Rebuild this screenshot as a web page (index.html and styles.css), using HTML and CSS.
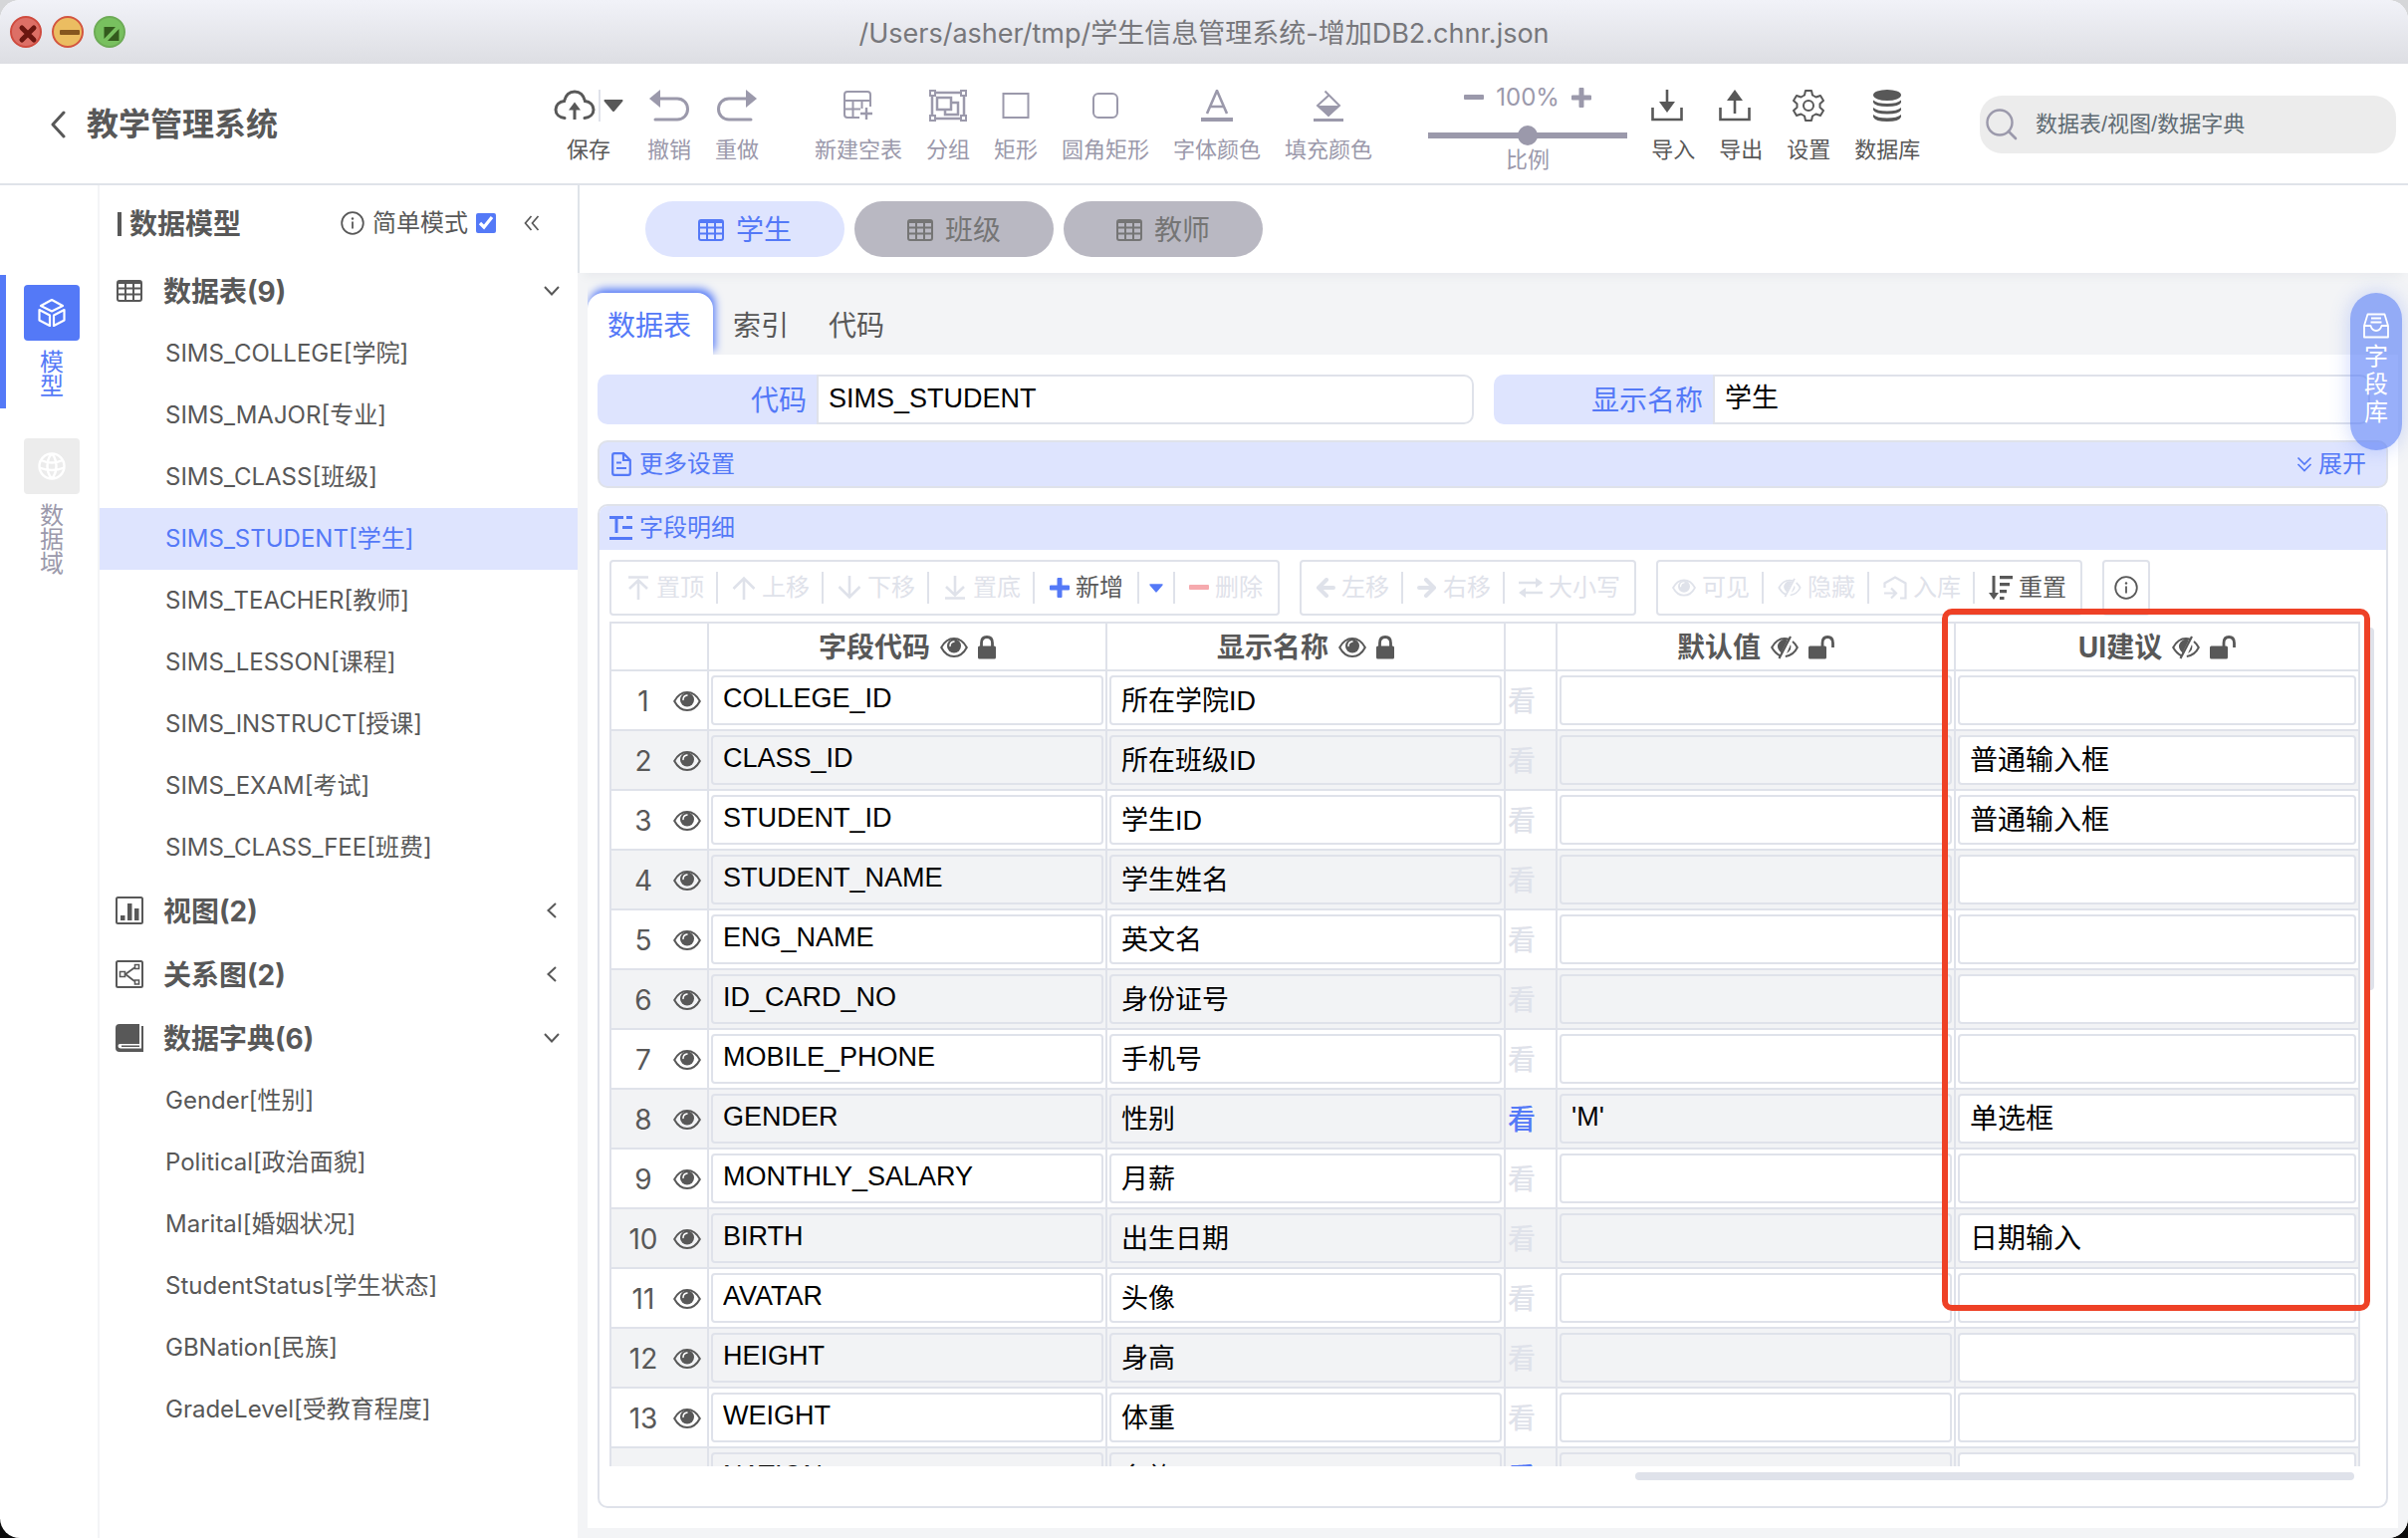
FILE: index.html
```html
<!DOCTYPE html>
<html lang="zh-CN">
<head>
<meta charset="utf-8">
<title>教学管理系统</title>
<link rel="stylesheet" href="styles.css">
</head>
<body>
<svg class="sprite" aria-hidden="true">
  <symbol id="i-back" viewBox="0 0 16 28"><path d="M14 2 3 14l11 12" fill="none" stroke="currentColor" stroke-width="3" stroke-linecap="round" stroke-linejoin="round"/></symbol>
  <symbol id="i-cloud" viewBox="0 0 42 32"><path d="M11 28.500C5.500 28 2 24.500 2 20c0-4.500 3.500-8 8.500-8.500C12 5.500 16 2 21 2s9 3.500 10.500 9.500C36.500 12 40 15.500 40 20c0 4.500-3.500 8-9 8.500" fill="none" stroke="currentColor" stroke-width="3" stroke-linecap="round"/><path d="M21 12.500l6 8h-4.500V30h-3v-9.500H15z" fill="currentColor"/></symbol>
  <symbol id="i-caret" viewBox="0 0 20 12"><path d="M1 0h18q1 1 0 2l-8 9.500q-1 1-2 0L1 2q-1-1 0-2z" fill="currentColor"/></symbol>
  <symbol id="i-undo" viewBox="0 0 40 32"><path d="M10 9h18c6 0 10.500 4.500 10.500 10.500S34 30 28 30H6" fill="none" stroke="currentColor" stroke-width="3" stroke-linecap="round"/><path d="M0 9 11 0v18z" fill="currentColor"/></symbol>
  <symbol id="i-redo" viewBox="0 0 40 32"><path d="M30 9H12C6 9 1.500 13.500 1.500 19.500S6 30 12 30h22" fill="none" stroke="currentColor" stroke-width="3" stroke-linecap="round"/><path d="M40 9 29 0v18z" fill="currentColor"/></symbol>
  <symbol id="i-newtable" viewBox="0 0 30 30"><path d="M27 16V4q0-3-3-3H4Q1 1 1 4v20q0 3 3 3h12M1 10h26M1 18.500h16M9.500 10v17M18.500 10v8" fill="none" stroke="currentColor" stroke-width="2"/><path d="M23 17v12M17 23h12" stroke="currentColor" stroke-width="2.400"/></symbol>
  <symbol id="i-group" viewBox="0 0 40 34"><path d="M4 4h32v26H4z" fill="none" stroke="currentColor" stroke-width="2.500"/><path d="M9 9h14v12H9zM23 14h7v12H17v-5" fill="none" stroke="currentColor" stroke-width="2.500"/><path d="M2 2h5v5H2zM33 2h5v5h-5zM2 27h5v5H2zM33 27h5v5h-5z" fill="#fff" stroke="currentColor" stroke-width="2"/></symbol>
  <symbol id="i-rect" viewBox="0 0 28 28"><path d="M1.500 2h25v24h-25z" fill="none" stroke="currentColor" stroke-width="2"/></symbol>
  <symbol id="i-round" viewBox="0 0 28 28"><rect x="2" y="2" width="24" height="24" rx="5" fill="none" stroke="currentColor" stroke-width="2"/></symbol>
  <symbol id="i-font" viewBox="0 0 32 32"><path d="M6 24 16 1l10 23M9.500 17h13" fill="none" stroke="currentColor" stroke-width="2.600"/><path d="M0 28h32v4H0z" fill="currentColor"/></symbol>
  <symbol id="i-fill" viewBox="0 0 30 32"><path d="M11.500 1.500 26 16 15 26 4 16 16 5" fill="none" stroke="currentColor" stroke-width="2"/><path d="M4 16h22L15 27zM0 29h30v3H0z" fill="currentColor"/></symbol>
  <symbol id="i-minus" viewBox="0 0 20 20"><rect y="7" width="20" height="5" rx="1" fill="currentColor"/></symbol>
  <symbol id="i-plus" viewBox="0 0 20 20"><path d="M1 7.500h6.500V1q0-1 1-1h3q1 0 1 1v6.500H19q1 0 1 1v3q0 1-1 1h-6.500V19q0 1-1 1h-3q-1 0-1-1v-6.500H1q-1 0-1-1v-3q0-1 1-1z" fill="currentColor"/></symbol>
  <symbol id="i-in" viewBox="0 0 32 32"><path d="M1.500 18v12h29V18M16 0v14" fill="none" stroke="currentColor" stroke-width="2.600"/><path d="M8 12h16l-8 11z" fill="currentColor"/></symbol>
  <symbol id="i-out" viewBox="0 0 32 32"><path d="M1.500 18v12h29V18M16 24V8" fill="none" stroke="currentColor" stroke-width="2.600"/><path d="M8 11h16L16 0z" fill="currentColor"/></symbol>
  <symbol id="i-gear" viewBox="0 0 32 32"><path d="M13 1h6l1 4.500 3.500 2L28 6l3 5-3.500 3.200v3.600L31 21l-3 5-4.500-1.500-3.500 2L19 31h-6l-1-4.500-3.500-2L4 26l-3-5 3.500-3.200v-3.600L1 11l3-5 4.500 1.500 3.500-2z" fill="none" stroke="currentColor" stroke-width="2" stroke-linejoin="round"/><circle cx="16" cy="16" r="5" fill="none" stroke="currentColor" stroke-width="2"/></symbol>
  <symbol id="i-db" viewBox="0 0 28 32"><g fill="currentColor"><ellipse cx="14" cy="5.500" rx="14" ry="5.500"/><path d="M0 10.500q4 3.500 14 3.500t14-3.500V13q-2 4-14 4T0 13zM0 18q4 3.500 14 3.500T28 18v2.500q-2 4-14 4T0 20.500zM0 25q4 3.500 14 3.500T28 25v2.500Q26 32 14 32T0 27.500z"/></g></symbol>
  <symbol id="i-search" viewBox="0 0 32 32"><circle cx="14" cy="14" r="12.500" fill="none" stroke="currentColor" stroke-width="2.400"/><path d="m23 23 7 7" stroke="currentColor" stroke-width="2.600" stroke-linecap="round"/></symbol>
  <symbol id="i-cube" viewBox="0 0 28 28"><path d="M14 1l11 6-11 5.500L3 7zM1.500 11 12 16.500V27L1.500 21.500zM26.500 11 16 16.500V27l10.500-5.500z" fill="none" stroke="currentColor" stroke-width="2.200" stroke-linejoin="round"/></symbol>
  <symbol id="i-globe" viewBox="0 0 28 28"><g fill="none" stroke="currentColor" stroke-width="2.400"><circle cx="14" cy="14" r="12.500"/><path d="M14 1.500C8 8 8 20 14 26.500M14 1.500C20 8 20 20 14 26.500M3 8q11 5 22 0M1.500 15.500q12.500 5 25 0"/></g></symbol>
  <symbol id="i-info" viewBox="0 0 24 24"><circle cx="12" cy="12" r="10.800" fill="none" stroke="currentColor" stroke-width="1.800"/><circle cx="12" cy="7.500" r="1.200" fill="currentColor"/><path d="M12 10.500v7" stroke="currentColor" stroke-width="1.800"/></symbol>
  <symbol id="i-dbl-left" viewBox="0 0 16 16"><path d="M7.500 1 1.500 8l6 7M14.500 1l-6 7 6 7" fill="none" stroke="currentColor" stroke-width="1.700"/></symbol>
  <symbol id="i-dbl-down" viewBox="0 0 16 16"><path d="M1.500 1.500 8 8l6.500-6.500M1.500 8 8 14.500 14.500 8" fill="none" stroke="currentColor" stroke-width="1.700"/></symbol>
  <symbol id="i-down" viewBox="0 0 16 16"><path d="m1 4 7 7.500L15 4" fill="none" stroke="currentColor" stroke-width="2"/></symbol>
  <symbol id="i-left" viewBox="0 0 16 16"><path d="M12 1 4.500 8l7.500 7" fill="none" stroke="currentColor" stroke-width="2"/></symbol>
  <symbol id="i-table" viewBox="0 0 26 22"><rect x="1" y="1" width="24" height="20" rx="2" fill="none" stroke="currentColor" stroke-width="2"/><path d="M1 3h24M1 8.500h24M1 14.500h24M9 3v18M17 3v18" fill="none" stroke="currentColor" stroke-width="2"/></symbol>
  <symbol id="i-chart" viewBox="0 0 28 28"><rect x="1" y="1" width="26" height="26" rx="1.500" fill="none" stroke="currentColor" stroke-width="2"/><path d="M5 19h4.500v5H5zM12 7h4.500v17H12zM19 12h4.500v12H19z" fill="currentColor"/></symbol>
  <symbol id="i-rel" viewBox="0 0 28 28"><g fill="none" stroke="currentColor"><rect x="1" y="1" width="26" height="26" rx="1.500" stroke-width="2"/><path d="M4.500 11.500h5v5h-5zM19.500 4.500h4v4h-4zM19.500 20h4v4h-4z" stroke-width="1.600"/><path d="M19 7.500 10 14l9 7" stroke-width="1.800"/></g></symbol>
  <symbol id="i-book" viewBox="0 0 28 28"><path d="M4 0h20v20H4.500q-2 0-2 2T5 24.500h21V2h2v26H4q-4 0-4-4V4q0-4 4-4zM6 21.500h18v1.500H6z" fill="currentColor"/></symbol>
  <symbol id="i-doc" viewBox="0 0 20 24"><path d="M12 1.200H3Q1.200 1.200 1.200 3v18q0 1.800 1.800 1.800h14q1.800 0 1.800-1.800V8zM12 1.200V8h6.800M5 10.500h5M5 16h10" fill="none" stroke="currentColor" stroke-width="2.200"/></symbol>
  <symbol id="i-text" viewBox="0 0 24 24"><path d="M0 0h14v3H8.500v14h-3V3H0zM17 0h6v3h-6zM13 10h10v3H13zM0 21h23v3H0z" fill="currentColor"/></symbol>
  <symbol id="i-box" viewBox="0 0 26 26"><path d="M1 13 4.500 1.500h17L25 13v11.500H1zM1 13h6.500q1.500 5 5.500 5t5.500-5H25M8 5.500h10M7.500 9.500h11" fill="none" stroke="currentColor" stroke-width="1.800" stroke-linejoin="round"/></symbol>
  <symbol id="i-top" viewBox="0 0 24 24"><path d="M2 1.500h20M12 24V5M3 13l9-8.500 9 8.500" fill="none" stroke="currentColor" stroke-width="2.600"/></symbol>
  <symbol id="i-up" viewBox="0 0 24 24"><path d="M12 24V3M1.500 13 12 2.500 22.500 13" fill="none" stroke="currentColor" stroke-width="2.600"/></symbol>
  <symbol id="i-dn" viewBox="0 0 24 24"><path d="M12 0v21M1.500 11 12 21.500 22.500 11" fill="none" stroke="currentColor" stroke-width="2.600"/></symbol>
  <symbol id="i-bottom" viewBox="0 0 24 24"><path d="M2 22.500h20M12 0v19M3 11l9 8.500 9-8.500" fill="none" stroke="currentColor" stroke-width="2.600"/></symbol>
  <symbol id="i-arrl" viewBox="0 0 20 20"><path d="M11 2 3 10l8 8M4 10h14" fill="none" stroke="currentColor" stroke-width="4" stroke-linecap="round" stroke-linejoin="round"/></symbol>
  <symbol id="i-arrr" viewBox="0 0 20 20"><path d="m9 2 8 8-8 8M16 10H2" fill="none" stroke="currentColor" stroke-width="4" stroke-linecap="round" stroke-linejoin="round"/></symbol>
  <symbol id="i-swap" viewBox="0 0 24 20"><path d="M0 5h18M6 15h18" stroke="currentColor" stroke-width="2.600"/><path d="M17 0l7 5-7 5zM7 10l-7 5 7 5z" fill="currentColor"/></symbol>
  <symbol id="i-eye" viewBox="0 0 28 22"><path d="M1.200 11Q6 2 14 2t12.800 9Q22 20 14 20T1.200 11z" fill="none" stroke="currentColor" stroke-width="2"/><circle cx="14" cy="9.500" r="7" fill="currentColor"/><path d="M10 9.500q0-4 4-4.500" fill="none" stroke="#fff" stroke-width="1.500" stroke-linecap="round"/></symbol>
  <symbol id="i-eyeoff" viewBox="0 0 28 24"><path d="M10 20.500Q4.500 18 1.200 12 6 3 14 3q2 0 4 .6M22 6q3 2.500 4.800 6-4 8-12 9" fill="none" stroke="currentColor" stroke-width="2"/><path d="M17 4.500A7 7 0 0 0 8.500 15l2 2.500zM20 9q2 5-4 9z" fill="currentColor"/><path d="M20 1 8.500 23" stroke="currentColor" stroke-width="2.200"/></symbol>
  <symbol id="i-lock" viewBox="0 0 18 24"><rect y="10.500" width="18" height="13" rx="1.500" fill="currentColor"/><path d="M3.500 11V7.500Q3.500 1.500 9 1.500t5.500 6V11" fill="none" stroke="currentColor" stroke-width="2.800"/></symbol>
  <symbol id="i-unlock" viewBox="0 0 26 24"><rect y="10.500" width="18" height="13" rx="1.500" fill="currentColor"/><path d="M14 11V7.500Q14 1.500 19.200 1.500t5.300 6V12" fill="none" stroke="currentColor" stroke-width="2.800"/></symbol>
  <symbol id="i-store" viewBox="0 0 24 24"><path d="M1.500 12V7.500L12 1.500l10.500 6v15H17M1 17.500h11M8 12.500l5 5-5 5" fill="none" stroke="currentColor" stroke-width="2.200"/></symbol>
  <symbol id="i-sort" viewBox="0 0 24 24"><path d="M5 0v20" stroke="currentColor" stroke-width="3"/><path d="M0 17h10l-5 7zM11 0h13v3.200H11zM11 7h10v3.200H11zM11 14h7v3.200h-7zM11 21h4.500v3H11z" fill="currentColor"/></symbol>
</svg>

<div class="window">
  <div class="titlebar">
    <div class="lights">
      <button class="light red" aria-label="关闭"><svg viewBox="0 0 32 32"><path d="m10 10 12 12M22 10 10 22" stroke="#6a1610" stroke-width="5" stroke-linecap="round"/></svg></button>
      <button class="light yellow" aria-label="最小化"><svg viewBox="0 0 32 32"><rect x="6" y="12" width="20" height="5" rx="1" fill="#85561f"/></svg></button>
      <button class="light green" aria-label="缩放"><svg viewBox="0 0 32 32"><path d="M8.500 9H20L8.500 21zM23.500 23H12l11.500-12z" fill="#335a1d"/></svg></button>
    </div>
    <div class="path">/Users/asher/tmp/学生信息管理系统-增加DB2.chnr.json</div>
  </div>

  <header class="header">
    <a class="brand" href="#"><svg class="brand-back"><use href="#i-back"/></svg><span>教学管理系统</span></a>
    <div class="toolbar">
      <div class="tools">
        <button class="tool dark"><span class="tool-icon save"><svg width="42" height="36"><use href="#i-cloud"/></svg><i class="save-sep"></i><svg width="20" height="12"><use href="#i-caret"/></svg></span>保存</button>
        <button class="tool"><span class="tool-icon"><svg width="40" height="32"><use href="#i-undo"/></svg></span>撤销</button>
        <button class="tool"><span class="tool-icon"><svg width="40" height="32"><use href="#i-redo"/></svg></span>重做</button>
      </div>
      <div class="tools">
        <button class="tool"><span class="tool-icon"><svg width="30" height="30"><use href="#i-newtable"/></svg></span>新建空表</button>
        <button class="tool"><span class="tool-icon"><svg width="40" height="34"><use href="#i-group"/></svg></span>分组</button>
        <button class="tool"><span class="tool-icon"><svg width="28" height="28"><use href="#i-rect"/></svg></span>矩形</button>
        <button class="tool"><span class="tool-icon"><svg width="28" height="28"><use href="#i-round"/></svg></span>圆角矩形</button>
        <button class="tool"><span class="tool-icon"><svg width="32" height="32"><use href="#i-font"/></svg></span>字体颜色</button>
        <button class="tool"><span class="tool-icon"><svg width="30" height="32"><use href="#i-fill"/></svg></span>填充颜色</button>
      </div>
      <div class="tools">
        <div class="zoom">
          <div class="zoom-row"><button aria-label="缩小"><svg width="20" height="20"><use href="#i-minus"/></svg></button><span>100%</span><button aria-label="放大"><svg width="20" height="20"><use href="#i-plus"/></svg></button></div>
          <input class="zoom-range" id="zoom" type="range" min="0" max="200" value="100">
          <label for="zoom">比例</label>
        </div>
        <button class="tool dark start"><span class="tool-icon"><svg width="32" height="32"><use href="#i-in"/></svg></span>导入</button>
        <button class="tool dark start"><span class="tool-icon"><svg width="32" height="32"><use href="#i-out"/></svg></span>导出</button>
        <button class="tool dark"><span class="tool-icon"><svg width="32" height="32"><use href="#i-gear"/></svg></span>设置</button>
        <button class="tool dark"><span class="tool-icon"><svg width="28" height="32"><use href="#i-db"/></svg></span>数据库</button>
      </div>
    </div>
    <label class="search"><svg width="32" height="32"><use href="#i-search"/></svg><input type="search" placeholder="数据表/视图/数据字典" aria-label="搜索"></label>
  </header>

  <div class="body">
    <nav class="rail">
      <a class="rail-item active" href="#"><span class="rail-icon"><svg width="28" height="28"><use href="#i-cube"/></svg></span><span class="rail-text">模型</span></a>
      <a class="rail-item" href="#"><span class="rail-icon"><svg width="28" height="28"><use href="#i-globe"/></svg></span><span class="rail-text">数据域</span></a>
    </nav>

    <aside class="panel">
      <div class="panel-head">
        <h2>数据模型</h2>
        <svg class="panel-info" width="24" height="24"><use href="#i-info"/></svg>
        <label for="simple">简单模式</label>
        <input id="simple" type="checkbox" checked>
        <button class="collapse" aria-label="收起"><svg width="16" height="16"><use href="#i-dbl-left"/></svg></button>
      </div>
      <h3 class="group"><svg width="26" height="22"><use href="#i-table"/></svg><span>数据表(9)</span><svg class="arrow"><use href="#i-down"/></svg></h3>
      <ul>
        <li><a href="#">SIMS_COLLEGE[学院]</a></li>
        <li><a href="#">SIMS_MAJOR[专业]</a></li>
        <li><a href="#">SIMS_CLASS[班级]</a></li>
        <li><a class="active" href="#">SIMS_STUDENT[学生]</a></li>
        <li><a href="#">SIMS_TEACHER[教师]</a></li>
        <li><a href="#">SIMS_LESSON[课程]</a></li>
        <li><a href="#">SIMS_INSTRUCT[授课]</a></li>
        <li><a href="#">SIMS_EXAM[考试]</a></li>
        <li><a href="#">SIMS_CLASS_FEE[班费]</a></li>
      </ul>
      <h3 class="group"><svg width="28" height="28"><use href="#i-chart"/></svg><span>视图(2)</span><svg class="arrow"><use href="#i-left"/></svg></h3>
      <h3 class="group"><svg width="28" height="28"><use href="#i-rel"/></svg><span>关系图(2)</span><svg class="arrow"><use href="#i-left"/></svg></h3>
      <h3 class="group"><svg width="28" height="28"><use href="#i-book"/></svg><span>数据字典(6)</span><svg class="arrow"><use href="#i-down"/></svg></h3>
      <ul>
        <li><a href="#">Gender[性别]</a></li>
        <li><a href="#">Political[政治面貌]</a></li>
        <li><a href="#">Marital[婚姻状况]</a></li>
        <li><a href="#">StudentStatus[学生状态]</a></li>
        <li><a href="#">GBNation[民族]</a></li>
        <li><a href="#">GradeLevel[受教育程度]</a></li>
      </ul>
    </aside>

    <main class="main">
      <div class="pills">
        <button class="pill active"><svg width="26" height="22"><use href="#i-table"/></svg>学生</button>
        <button class="pill"><svg width="26" height="22"><use href="#i-table"/></svg>班级</button>
        <button class="pill"><svg width="26" height="22"><use href="#i-table"/></svg>教师</button>
      </div>
      <div class="work">
        <div class="tabs">
          <button class="tab active">数据表</button><button class="tab">索引</button><button class="tab">代码</button>
        </div>
        <div class="card">
          <div class="form">
            <div class="field"><label for="code">代码</label><input id="code" value="SIMS_STUDENT"></div>
            <div class="field"><label for="name">显示名称</label><input id="name" value="学生"></div>
          </div>
          <div class="more">
            <svg width="20" height="24"><use href="#i-doc"/></svg><span>更多设置</span>
            <button class="expand"><svg width="16" height="16"><use href="#i-dbl-down"/></svg>展开</button>
          </div>
          <section class="detail">
            <h4><svg width="24" height="24"><use href="#i-text"/></svg>字段明细</h4>
            <div class="ops">
              <div class="op-group rows">
                <button disabled><svg width="24" height="24"><use href="#i-top"/></svg>置顶</button>
                <button disabled><svg width="24" height="24"><use href="#i-up"/></svg>上移</button>
                <button disabled><svg width="24" height="24"><use href="#i-dn"/></svg>下移</button>
                <button disabled><svg width="24" height="24"><use href="#i-bottom"/></svg>置底</button>
                <button class="add"><svg class="blue" width="20" height="20"><use href="#i-plus"/></svg>新增</button>
                <button class="drop" aria-label="更多新增"><svg class="blue" width="14" height="9"><use href="#i-caret"/></svg></button>
                <button disabled><svg class="pink" width="20" height="20"><use href="#i-minus"/></svg>删除</button>
              </div>
              <div class="op-group">
                <button disabled><svg width="20" height="20"><use href="#i-arrl"/></svg>左移</button>
                <button disabled><svg width="20" height="20"><use href="#i-arrr"/></svg>右移</button>
                <button disabled><svg width="24" height="20"><use href="#i-swap"/></svg>大小写</button>
              </div>
              <div class="op-group">
                <button disabled><svg width="24" height="20"><use href="#i-eye"/></svg>可见</button>
                <button disabled><svg width="24" height="20"><use href="#i-eyeoff"/></svg>隐藏</button>
                <button disabled><svg width="24" height="24"><use href="#i-store"/></svg>入库</button>
                <button><svg width="24" height="24"><use href="#i-sort"/></svg>重置</button>
              </div>
              <div class="op-group info"><button aria-label="说明"><svg width="24" height="24"><use href="#i-info"/></svg></button></div>
            </div>
            <div class="grid-wrap">
              <div class="grid">
                <table>
                  <colgroup><col class="c-no"><col class="c-text"><col class="c-text"><col class="c-look"><col class="c-text"><col></colgroup>
                  <thead><tr>
                    <th></th>
                    <th><span class="th">字段代码<svg width="28" height="22"><use href="#i-eye"/></svg><svg width="18" height="26"><use href="#i-lock"/></svg></span></th>
                    <th><span class="th">显示名称<svg width="28" height="22"><use href="#i-eye"/></svg><svg width="18" height="26"><use href="#i-lock"/></svg></span></th>
                    <th></th>
                    <th><span class="th">默认值<svg width="28" height="24"><use href="#i-eyeoff"/></svg><svg width="26" height="26"><use href="#i-unlock"/></svg></span></th>
                    <th><span class="th">UI建议<svg width="28" height="24"><use href="#i-eyeoff"/></svg><svg width="26" height="26"><use href="#i-unlock"/></svg></span></th>
                  </tr></thead>
                  <tbody>
                    <tr><td><span class="no"><b>1</b><svg width="28" height="22"><use href="#i-eye"/></svg></span></td><td><input aria-label="字段代码" value="COLLEGE_ID"></td><td><input aria-label="显示名称" value="所在学院ID"></td><td><button class="look">看</button></td><td><input aria-label="默认值"></td><td><input aria-label="UI建议"></td></tr>
                    <tr><td><span class="no"><b>2</b><svg width="28" height="22"><use href="#i-eye"/></svg></span></td><td><input aria-label="字段代码" value="CLASS_ID"></td><td><input aria-label="显示名称" value="所在班级ID"></td><td><button class="look">看</button></td><td><input aria-label="默认值"></td><td><input aria-label="UI建议" value="普通输入框"></td></tr>
                    <tr><td><span class="no"><b>3</b><svg width="28" height="22"><use href="#i-eye"/></svg></span></td><td><input aria-label="字段代码" value="STUDENT_ID"></td><td><input aria-label="显示名称" value="学生ID"></td><td><button class="look">看</button></td><td><input aria-label="默认值"></td><td><input aria-label="UI建议" value="普通输入框"></td></tr>
                    <tr><td><span class="no"><b>4</b><svg width="28" height="22"><use href="#i-eye"/></svg></span></td><td><input aria-label="字段代码" value="STUDENT_NAME"></td><td><input aria-label="显示名称" value="学生姓名"></td><td><button class="look">看</button></td><td><input aria-label="默认值"></td><td><input aria-label="UI建议"></td></tr>
                    <tr><td><span class="no"><b>5</b><svg width="28" height="22"><use href="#i-eye"/></svg></span></td><td><input aria-label="字段代码" value="ENG_NAME"></td><td><input aria-label="显示名称" value="英文名"></td><td><button class="look">看</button></td><td><input aria-label="默认值"></td><td><input aria-label="UI建议"></td></tr>
                    <tr><td><span class="no"><b>6</b><svg width="28" height="22"><use href="#i-eye"/></svg></span></td><td><input aria-label="字段代码" value="ID_CARD_NO"></td><td><input aria-label="显示名称" value="身份证号"></td><td><button class="look">看</button></td><td><input aria-label="默认值"></td><td><input aria-label="UI建议"></td></tr>
                    <tr><td><span class="no"><b>7</b><svg width="28" height="22"><use href="#i-eye"/></svg></span></td><td><input aria-label="字段代码" value="MOBILE_PHONE"></td><td><input aria-label="显示名称" value="手机号"></td><td><button class="look">看</button></td><td><input aria-label="默认值"></td><td><input aria-label="UI建议"></td></tr>
                    <tr><td><span class="no"><b>8</b><svg width="28" height="22"><use href="#i-eye"/></svg></span></td><td><input aria-label="字段代码" value="GENDER"></td><td><input aria-label="显示名称" value="性别"></td><td><button class="look on">看</button></td><td><input aria-label="默认值" value="'M'"></td><td><input aria-label="UI建议" value="单选框"></td></tr>
                    <tr><td><span class="no"><b>9</b><svg width="28" height="22"><use href="#i-eye"/></svg></span></td><td><input aria-label="字段代码" value="MONTHLY_SALARY"></td><td><input aria-label="显示名称" value="月薪"></td><td><button class="look">看</button></td><td><input aria-label="默认值"></td><td><input aria-label="UI建议"></td></tr>
                    <tr><td><span class="no"><b>10</b><svg width="28" height="22"><use href="#i-eye"/></svg></span></td><td><input aria-label="字段代码" value="BIRTH"></td><td><input aria-label="显示名称" value="出生日期"></td><td><button class="look">看</button></td><td><input aria-label="默认值"></td><td><input aria-label="UI建议" value="日期输入"></td></tr>
                    <tr><td><span class="no"><b>11</b><svg width="28" height="22"><use href="#i-eye"/></svg></span></td><td><input aria-label="字段代码" value="AVATAR"></td><td><input aria-label="显示名称" value="头像"></td><td><button class="look">看</button></td><td><input aria-label="默认值"></td><td><input aria-label="UI建议"></td></tr>
                    <tr><td><span class="no"><b>12</b><svg width="28" height="22"><use href="#i-eye"/></svg></span></td><td><input aria-label="字段代码" value="HEIGHT"></td><td><input aria-label="显示名称" value="身高"></td><td><button class="look">看</button></td><td><input aria-label="默认值"></td><td><input aria-label="UI建议"></td></tr>
                    <tr><td><span class="no"><b>13</b><svg width="28" height="22"><use href="#i-eye"/></svg></span></td><td><input aria-label="字段代码" value="WEIGHT"></td><td><input aria-label="显示名称" value="体重"></td><td><button class="look">看</button></td><td><input aria-label="默认值"></td><td><input aria-label="UI建议"></td></tr>
                    <tr><td><span class="no"><b>14</b><svg width="28" height="22"><use href="#i-eye"/></svg></span></td><td><input aria-label="字段代码" value="NATION"></td><td><input aria-label="显示名称" value="名族"></td><td><button class="look on">看</button></td><td><input aria-label="默认值"></td><td><input aria-label="UI建议"></td></tr>
                  </tbody>
                </table>
              </div>
              <div class="hbar"></div>
              <div class="vbar"></div>
              <div class="highlight"></div>
            </div>
          </section>
        </div>
      </div>
      <button class="library"><svg width="26" height="26"><use href="#i-box"/></svg><span>字段库</span></button>
    </main>
  </div>
</div>
</body>
</html>
```

FILE: styles.css
```css
:root {
  --blue: #5479f7;
  --tint: #dee4fe;
  --line: #dfe2ea;
  --ink: #585858;
  --muted: #9b99ab;
  --gray: #f3f4f6;
  --ui: Inter, "Noto Sans CJK SC", sans-serif;
}
* { box-sizing: border-box; }
html, body { height: 100%; }
body {
  margin: 0;
  background: linear-gradient(#d5d6d8 50%, #0c0c0c 50%);
  color: var(--ink);
  font: 24px/28px var(--ui);
  overflow: hidden;
}
button { font: inherit; color: inherit; background: none; border: 0; padding: 0; margin: 0; }
input { font: inherit; margin: 0; min-width: 0; }
a { color: inherit; text-decoration: none; }
ul { list-style: none; margin: 0; padding: 0; }
h2, h3, h4 { margin: 0; }
svg { display: block; flex: none; }
.sprite { display: none; }

.window { height: 100vh; display: flex; flex-direction: column; background: #fff; border-radius: 20px; overflow: hidden; }

.titlebar { height: 64px; flex: none; display: grid; grid-template-columns: 1fr auto 1fr; align-items: center; background: linear-gradient(#f1f2f8, #dddee3); }
.lights { display: flex; gap: 10px; padding-left: 10px; }
.light { width: 32px; height: 32px; border-radius: 50%; border: 2px solid; display: grid; place-items: center; }
.light svg { width: 32px; height: 32px; }
.red { background: #dd6f66; border-color: #cf4b3f; }
.yellow { background: #ebbd61; border-color: #d3553f; }
.green { background: #78c05f; border-color: #6dab56; }
.path { font-size: 27px; color: #77777b; padding-top: 4px; }

.header { height: 122px; flex: none; display: flex; align-items: flex-start; border-bottom: 2px solid #dfe3e9; padding-right: 12px; }
.brand { width: 556px; flex: none; display: flex; align-items: center; gap: 21px; height: 120px; padding: 2px 0 0 50px; font-size: 32px; font-weight: 700; }
.brand-back { width: 16px; height: 28px; }
.toolbar { display: flex; gap: 56px; padding-top: 20px; color: var(--muted); font-size: 22px; }
.tools { display: flex; gap: 24px; align-items: flex-start; }
.tool { display: flex; flex-direction: column; align-items: center; gap: 10px; padding-top: 2px; white-space: nowrap; }
.tool.dark { color: var(--ink); }
.tool.start { align-items: flex-start; }
.tool-icon { height: 40px; display: flex; align-items: center; justify-content: center; }
.save-sep { width: 2px; height: 32px; background: var(--line); margin: 0 3px; }
.zoom { width: 200px; display: flex; flex-direction: column; align-items: center; }
.zoom-row { display: flex; align-items: center; gap: 12px; height: 28px; font-size: 24px; }
.zoom-range { appearance: none; width: 100%; height: 20px; margin-top: 14px; background: linear-gradient(var(--muted), var(--muted)) center / 100% 6px no-repeat; }
.zoom-range::-webkit-slider-thumb { appearance: none; width: 20px; height: 20px; border-radius: 50%; background: var(--muted); }
.search { width: 418px; height: 58px; margin: 32px 0 0 auto; display: flex; align-items: center; gap: 18px; padding: 0 6px; border-radius: 22px; background: #ececec; color: var(--muted); }
.search input { flex: 1; border: 0; outline: 0; background: none; padding: 0; font: 22px/28px "Liberation Sans", "Noto Sans CJK SC", sans-serif; }
.search input::placeholder { color: #5f6b73; opacity: 1; }

.body { flex: 1; min-height: 0; display: flex; }
.rail { width: 100px; flex: none; border-right: 2px solid var(--gray); padding-top: 90px; display: flex; flex-direction: column; gap: 20px; }
.rail-item { display: flex; flex-direction: column; align-items: center; gap: 10px; padding: 10px 12px 10px 18px; color: var(--muted); }
.rail-item.active { color: var(--blue); padding-left: 12px; border-left: 6px solid var(--blue); }
.rail-icon { width: 56px; height: 56px; border-radius: 4px; display: grid; place-items: center; background: #ececec; color: #fff; }
.active .rail-icon { background: var(--blue); }
.rail-text { width: 24px; line-height: 24px; word-break: break-all; }

.panel { width: 480px; flex: none; overflow: hidden; }
.panel-head { height: 74px; display: flex; align-items: center; padding: 2px 38px 0 18px; }
.panel-head h2 { display: flex; align-items: center; gap: 8px; padding-top: 2px; font-size: 28px; margin-right: auto; }
.panel-head h2::before { content: ""; width: 4px; height: 24px; background: var(--ink); }
.panel-info { margin-right: 8px; }
.panel-head input { width: 20px; height: 20px; margin: 0 28px 0 8px; accent-color: var(--blue); }
.group { height: 64px; display: flex; align-items: center; padding: 0 18px 0 16px; font-size: 28px; }
.group span { flex: 1; margin-left: 20px; padding-top: 2px; }
.group svg:first-child { width: 28px; }
.arrow { width: 16px; height: 16px; }
.panel li a { display: block; height: 62px; line-height: 62px; padding-left: 66px; }
.panel li .active { background: var(--tint); color: var(--blue); }

.main { position: relative; flex: 1; min-width: 0; display: flex; flex-direction: column; background: var(--gray); }
.pills { height: 88px; flex: none; display: flex; align-items: center; gap: 10px; padding: 0 66px; background: #fff; border-left: 2px solid #dfe3e9; box-shadow: 0 10px 8px -6px #e9ebee; font-size: 28px; }
.pill { width: 200px; height: 56px; padding-top: 2px; border-radius: 28px; display: flex; align-items: center; justify-content: center; gap: 12px; background: #b9b8c2; color: #757575; }
.pill.active { background: var(--tint); color: var(--blue); }
.work { flex: 1; min-height: 0; display: flex; flex-direction: column; padding: 0 10px 10px; overflow: hidden; }
.tabs { display: flex; height: 82px; flex: none; padding-top: 20px; font-size: 28px; overflow: hidden; }
.tab { padding: 4px 20px 0; }
.tab.active { padding-right: 22px; background: #fff; color: var(--blue); border-radius: 16px 16px 0 0; box-shadow: 2px -4px 8px var(--blue); }
.card { flex: 1; min-height: 0; display: flex; flex-direction: column; gap: 16px; padding: 20px 10px; background: #fff; }
.form { display: flex; gap: 20px; padding-right: 18px; }
.field { flex: 1; display: flex; height: 50px; }
.field label { width: 25%; display: flex; align-items: center; justify-content: flex-end; padding: 2px 10px 0 0; border-radius: 10px 0 0 10px; background: var(--tint); color: var(--blue); font-size: 28px; }
.field input { flex: 1; border: 2px solid var(--line); border-radius: 0 10px 10px 0; padding: 0 10px 2px; }
.field input, td input { font: 27px/32px "Liberation Sans", "Noto Sans CJK SC", sans-serif; color: #000; background: none; outline: 0; }
.more { height: 48px; flex: none; display: flex; align-items: center; gap: 8px; padding: 0 20px 0 12px; border: 2px solid var(--line); border-radius: 10px; background: var(--tint); color: var(--blue); }
.expand { margin-left: auto; display: flex; align-items: center; gap: 6px; }
.detail { flex: 1; min-height: 0; display: flex; flex-direction: column; border: 2px solid var(--line); border-radius: 10px; padding-bottom: 26px; }
.detail h4 { height: 44px; flex: none; display: flex; align-items: center; gap: 6px; padding-left: 10px; background: var(--tint); color: var(--blue); font-size: 24px; font-weight: 400; border-radius: 8px 8px 0 0; }
.ops { display: flex; gap: 20px; padding: 10px 10px 6px; }
.op-group { display: flex; align-items: center; height: 56px; border: 2px solid var(--line); border-radius: 4px; }
.op-group.rows { padding: 0 1px; }
.op-group button { display: flex; align-items: center; gap: 6px; height: 32px; padding: 0 12px 0 14px; border-right: 2px solid var(--line); }
.op-group button:last-child { border-right: 0; padding-right: 14px; }
.op-group button:disabled { color: var(--line); }
.op-group .add { padding: 0 14px 0 15px; }
.op-group .drop { padding: 0 10px; }
.op-group.info { align-items: flex-start; padding-top: 10px; }
.op-group.info button { padding: 0 10px; }
.blue { color: var(--blue); }
.pink { color: #f6aaae; }

.grid-wrap { position: relative; flex: 1; min-height: 0; display: flex; flex-direction: column; margin: 0 26px 0 10px; }
.grid { flex: 1; min-height: 0; overflow: hidden; }
table { width: 100%; table-layout: fixed; border-collapse: separate; border-spacing: 0; border: solid var(--line); border-width: 2px 0 0 2px; }
.c-no { width: 98px; }
.c-text { width: 400px; }
.c-look { width: 52px; }
th, td { border: solid var(--line); border-width: 0 2px 2px 0; padding: 0 2px; }
th { height: 48px; font-size: 28px; }
td { height: 60px; }
.th { display: flex; align-items: center; justify-content: center; gap: 10px; padding-top: 2px; }
tbody tr:nth-child(even) { background: #f2f3f5; }
td input { display: block; width: 100%; height: 50px; border: 2px solid var(--line); border-radius: 4px; padding: 0 10px 4px; }
td:last-child input { background: #fff; font-size: 28px; }
.no { display: flex; align-items: center; gap: 10px; padding: 2px 0 0 10px; font-size: 28px; }
.no b { width: 40px; text-align: center; font-weight: 400; }
.look { display: block; padding-top: 2px; color: var(--line); font-size: 28px; font-weight: 500; }
.look.on { color: var(--blue); }
.hbar { width: 722px; height: 8px; margin: 6px 6px 0 auto; border-radius: 4px; background: var(--line); }
.vbar { position: absolute; right: -14px; top: 6px; width: 8px; height: 364px; border-radius: 4px; background: var(--line); }
.highlight { position: absolute; right: -10px; top: -13px; width: 430px; height: 705px; border: 6px solid #ee4126; border-radius: 10px; }

.library { position: absolute; right: 6px; top: 108px; width: 52px; height: 158px; display: flex; flex-direction: column; align-items: center; gap: 4px; padding-top: 20px; border-radius: 26px; background: rgb(84 121 247 / 60%); box-shadow: 0 0 20px rgb(84 121 247 / 30%); color: #fff; }
.library span { width: 24px; line-height: 28px; word-break: break-all; }
```
